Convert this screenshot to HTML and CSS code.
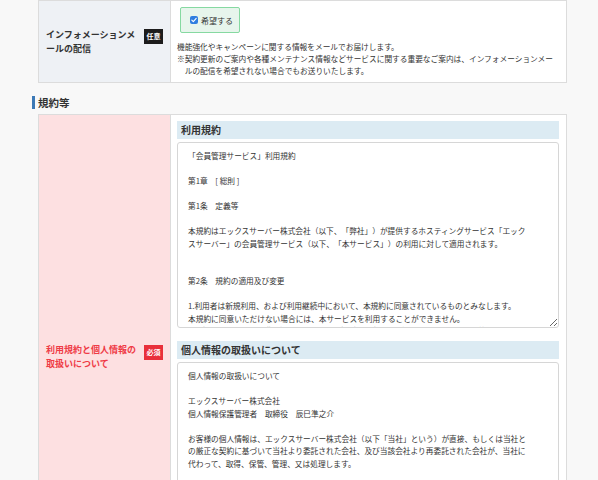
FILE: index.html
```html
<!DOCTYPE html>
<html lang="ja">
<head>
    <meta charset="UTF-8">
    <meta name="viewport" content="width=device-width, initial-scale=1.0">
    <title>会員管理サービス - お申し込み</title>
    <link rel="stylesheet" href="styles.css">
</head>
<body>
    <div class="page">
        <div class="form-table">
            <div class="form-row">
                <div class="form-label">
                    <div class="label-inner">
                        <span class="label-text">インフォメーションメールの配信</span>
                        <span class="badge badge-optional">任意</span>
                    </div>
                </div>
                <div class="form-field">
                    <label class="check-btn">
                        <span class="check-box">
                            <svg width="8" height="8" viewBox="0 0 8 8"><path d="M1.8 4.2 L3.3 5.7 L6.2 2.4" fill="none" stroke="#fff" stroke-width="1.1" stroke-linecap="round" stroke-linejoin="round"/></svg>
                        </span>
                        希望する
                    </label>
                    <p class="note note-first">機能強化やキャンペーンに関する情報をメールでお届けします。</p>
                    <p class="note note-indent">※契約更新のご案内や各種メンテナンス情報などサービスに関する重要なご案内は、インフォメーションメールの配信を希望されない場合でもお送りいたします。</p>
                </div>
            </div>
        </div>

        <h2 class="section-title">規約等</h2>

        <div class="form-table">
            <div class="form-row">
                <div class="form-label form-label-required">
                    <div class="label-inner">
                        <span class="label-text">利用規約と個人情報の取扱いについて</span>
                        <span class="badge badge-required">必須</span>
                    </div>
                </div>
                <div class="form-field">
                    <h3 class="terms-title">利用規約</h3>
                    <textarea class="terms-box" readonly>「会員管理サービス」利用規約

第1章　[ 総則 ]

第1条　定義等

本規約はエックスサーバー株式会社（以下、「弊社」）が提供するホスティングサービス「エックスサーバー」の会員管理サービス（以下、「本サービス」）の利用に対して適用されます。


第2条　規約の適用及び変更

1.利用者は新規利用、および利用継続中において、本規約に同意されているものとみなします。
本規約に同意いただけない場合には、本サービスを利用することができません。
2.弊社は、利用者の承諾を得ることなく、弊社所定の方法で通知することにより本規約を変更することができます。</textarea>

                    <h3 class="terms-title terms-title-second">個人情報の取扱いについて</h3>
                    <textarea class="terms-box" readonly>個人情報の取扱いについて

エックスサーバー株式会社
個人情報保護管理者　取締役　辰巳準之介

お客様の個人情報は、エックスサーバー株式会社（以下「当社」という）が直接、もしくは当社との厳正な契約に基づいて当社より委託された会社、及び当該会社より再委託された会社が、当社に代わって、取得、保管、管理、又は処理します。

1.個人情報の利用目的
当社は、取得した個人情報を以下の目的のために利用いたします。</textarea>

                    <label class="check-btn agree-btn">
                        <span class="check-box check-box-off"></span>
                        同意する
                    </label>
                </div>
            </div>
        </div>
    </div>
</body>
</html>
```

FILE: styles.css
```css
body {
    margin: 0;
    background-color: #f8f8f8;
    font-family: 'Noto Sans CJK JP', sans-serif;
    color: #333;
    text-spacing-trim: space-all;
}

.page {
    width: 529px;
    margin-left: 38px;
}

.form-table {
    border: 1px solid #dcdcdc;
    background-color: #fff;
}

.form-row {
    display: grid;
    grid-template-columns: 132px 1fr;
}

.form-label {
    display: flex;
    align-items: center;
    padding: 0 7px 0 7px;
    background-color: #eef1f5;
    border-right: 1px solid #dcdcdc;
}

.form-label-required {
    background-color: #fde0e1;
}

.label-inner {
    display: flex;
    justify-content: space-between;
    align-items: flex-start;
    width: 100%;
}

.label-text {
    width: 94px;
    font-size: 9px;
    line-height: 14px;
    font-weight: bold;
    color: #333;
}

.form-label-required .label-text {
    color: #ef3b46;
}

.badge {
    width: 19px;
    height: 15px;
    margin-top: 1px;
    display: flex;
    justify-content: center;
    align-items: center;
    font-size: 7px;
    font-weight: bold;
    color: #fff;
}

.badge-optional {
    background-color: #1c1c1c;
}

.badge-required {
    background-color: #e9303b;
    margin-top: 2px;
}

.form-field {
    padding: 6px 7px 5px 6px;
}

.check-btn {
    width: 60px;
    height: 26px;
    box-sizing: border-box;
    margin-left: 3px;
    padding-left: 9px;
    display: flex;
    align-items: center;
    gap: 3px;
    border: 1px solid #86d9a1;
    border-radius: 2px;
    background-color: #e7f5ec;
    font-size: 8px;
    color: #333;
}

.check-box {
    width: 8px;
    height: 8px;
    border-radius: 2px;
    background-color: #2f7ee0;
    display: flex;
}

.check-box-off {
    background-color: #fff;
    border: 1px solid #999;
    box-sizing: border-box;
}

.note {
    margin: 0;
    font-size: 7.7px;
    line-height: 12px;
    color: #333;
}

.note-first {
    margin-top: 8px;
}

.note-indent {
    padding-left: 1em;
    text-indent: -1em;
}

.section-title {
    margin: 13px 0 5px -6px;
    padding-left: 3px;
    border-left: 3px solid #3c79b6;
    font-size: 10.5px;
    line-height: 13px;
    font-weight: bold;
    color: #333;
}

.terms-title {
    margin: 0 0 3px 0;
    height: 18px;
    padding-left: 4px;
    background-color: #dcebf3;
    font-size: 10px;
    line-height: 18px;
    font-weight: bold;
    color: #333;
}

.terms-title-second {
    margin-top: 13px;
}

.terms-box {
    display: block;
    width: 100%;
    height: 186px;
    box-sizing: border-box;
    margin: 0;
    padding: 7px 27px 7px 10px;
    border: 1px solid #d6d6d6;
    border-radius: 3px;
    background-color: #fff;
    font-family: 'Noto Sans CJK JP', sans-serif;
    font-size: 7.7px;
    line-height: 12.5px;
    color: #333;
    text-spacing-trim: space-all;
    overflow: hidden;
    resize: vertical;
    outline: none;
}

.agree-btn {
    margin-top: 10px;
    margin-bottom: 9px;
}
```
